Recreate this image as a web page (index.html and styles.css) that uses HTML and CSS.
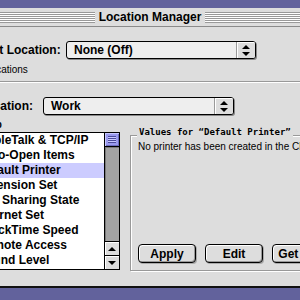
FILE: index.html
```html
<!DOCTYPE html>
<html lang="en">
<head>
    <meta charset="UTF-8">
    <title>Location Manager</title>
    <link rel="stylesheet" href="styles.css">
</head>
<body>
    <div class="window">
        <div class="titlebar">
            <div class="stripes"></div>
            <span class="title">Location Manager</span>
            <div class="stripes"></div>
        </div>

        <div class="content">
            <div class="row">
                <span class="label current-label">Current Location:</span>
                <div class="popup current-popup">
                    <span class="popup-value">None (Off)</span>
                    <span class="popup-arrows">
                        <svg width="8" height="11" viewBox="0 0 8 11"><path d="M4 0 L8 4 L0 4 Z M0 7 L8 7 L4 11 Z" fill="#000"/></svg>
                    </span>
                </div>
            </div>

            <div class="disclosure">
                <svg width="9" height="9" viewBox="0 0 9 9"><path d="M0 2 L9 2 L4.5 7 Z" fill="#000"/></svg>
                <span>Edit Locations</span>
            </div>

            <div class="separator"></div>

            <div class="row edit-row">
                <span class="label edit-label">Edit Location:</span>
                <div class="popup edit-popup">
                    <span class="popup-value">Work</span>
                    <span class="popup-arrows">
                        <svg width="8" height="11" viewBox="0 0 8 11"><path d="M4 0 L8 4 L0 4 Z M0 7 L8 7 L4 11 Z" fill="#000"/></svg>
                    </span>
                </div>
            </div>

            <div class="lower">
                <div class="settings">
                    <div class="settings-head">Setup</div>
                    <div class="list">
                        <ul class="items">
                            <li><span class="check"></span>AppleTalk &amp; TCP/IP</li>
                            <li><span class="check"></span>Auto-Open Items</li>
                            <li class="selected"><span class="check"></span>Default Printer</li>
                            <li><span class="check"></span>Extension Set</li>
                            <li><span class="check"></span>File Sharing State</li>
                            <li><span class="check"></span>Internet Set</li>
                            <li><span class="check"></span>QuickTime Speed</li>
                            <li><span class="check"></span>Remote Access</li>
                            <li><span class="check"></span>Sound Level</li>
                        </ul>
                        <div class="scrollbar">
                            <div class="thumb"><span class="grip"></span></div>
                            <div class="track"></div>
                            <div class="arrow">
                                <svg width="8" height="4" viewBox="0 0 8 4"><path d="M4 0 L8 4 L0 4 Z" fill="#000"/></svg>
                            </div>
                            <div class="arrow">
                                <svg width="8" height="4" viewBox="0 0 8 4"><path d="M0 0 L8 0 L4 4 Z" fill="#000"/></svg>
                            </div>
                        </div>
                    </div>
                </div>

                <div class="group">
                    <span class="group-title">Values for “Default Printer”</span>
                    <p class="group-text">No printer has been created in the Chooser.</p>
                    <div class="buttons">
                        <button class="btn">Apply</button>
                        <button class="btn">Edit</button>
                        <button class="btn">Get Info</button>
                    </div>
                </div>
            </div>
        </div>
    </div>
</body>
</html>
```

FILE: styles.css
```css
html, body {
    margin: 0;
    width: 300px;
    height: 300px;
    overflow: hidden;
}
body {
    background-color: #62629c;
    font-family: 'Liberation Sans', Arial, sans-serif;
    color: #000;
}
.window {
    margin: 8px 0 0 -44px;
    width: 388px;
    height: 280px;
    box-sizing: border-box;
    background-color: #dddddd;
    border-bottom: 2px solid #111;
    display: flex;
    flex-direction: column;
}
.titlebar {
    height: 19px;
    box-sizing: border-box;
    border-bottom: 1px solid #8a8a8a;
    display: flex;
    align-items: center;
    background-color: #dddddd;
}
.stripes {
    flex: 1;
    height: 11px;
    background: repeating-linear-gradient(to bottom, #999 0 1px, #fff 1px 2px);
}
.title {
    padding: 0 4px;
    font-size: 12px;
    font-weight: bold;
    line-height: 18px;
}
.content {
    padding: 14px 0 0 4px;
}
.row {
    display: flex;
    align-items: center;
    height: 18px;
}
.label {
    box-sizing: border-box;
    font-size: 12px;
    font-weight: bold;
    white-space: nowrap;
}
.current-label {
    width: 106px;
}
.edit-label {
    width: 90px;
    margin-left: -7px;
}
.popup {
    height: 18px;
    box-sizing: border-box;
    border: 1px solid #000;
    border-radius: 3px;
    background-color: #eeeeee;
    box-shadow: 1px 1px 0 #888;
    display: flex;
    align-items: center;
    overflow: hidden;
}
.current-popup {
    width: 190px;
}
.edit-popup {
    width: 191px;
}
.popup-value {
    flex: 1;
    padding-left: 7px;
    font-size: 12px;
    font-weight: bold;
}
.popup-arrows {
    width: 18px;
    height: 100%;
    border-left: 1px solid #999;
    background-color: #dddddd;
    box-shadow: inset 1px 1px 0 #fff;
    display: flex;
    align-items: center;
    justify-content: center;
}
.disclosure {
    margin: 5px 0 0 -6px;
    height: 12px;
    display: flex;
    align-items: center;
    gap: 2px;
    font-size: 10px;
    line-height: 12px;
}
.separator {
    margin: 5px 0 0 -4px;
    height: 1px;
    background-color: #999;
    border-bottom: 1px solid #fff;
}
.edit-row {
    margin-top: 14px;
}
.lower {
    margin-top: 4px;
    display: flex;
    align-items: flex-start;
}
.settings-head {
    height: 12px;
    padding-left: 14px;
    font-size: 10px;
    font-weight: bold;
    line-height: 12px;
}
.list {
    margin-top: 1px;
    width: 160px;
    height: 138px;
    box-sizing: border-box;
    border: 1px solid #000;
    background-color: #fff;
    display: flex;
    overflow: hidden;
}
.items {
    flex: 1;
    margin: 0;
    padding: 0;
    list-style: none;
}
.items li {
    height: 15px;
    display: flex;
    align-items: center;
    gap: 0;
    padding-left: 5px;
    font-size: 12px;
    font-weight: bold;
    line-height: 15px;
    white-space: nowrap;
}
.items li.selected {
    background-color: #ccccff;
}
.check {
    width: 10px;
    height: 10px;
    border: 1px solid #000;
    background-color: #eee;
}
.scrollbar {
    width: 14px;
    border-left: 1px solid #000;
    display: flex;
    flex-direction: column;
}
.thumb {
    height: 14px;
    box-sizing: border-box;
    border-bottom: 1px solid #000;
    background-color: #9a9aee;
    box-shadow: inset 1px 1px 0 #c8c8ff, inset -1px -1px 0 #6b6bc0;
    display: flex;
    align-items: center;
    justify-content: center;
}
.grip {
    width: 8px;
    height: 7px;
    background: repeating-linear-gradient(to bottom, #4a4a9a 0 1px, #c8c8ff 1px 2px);
}
.track {
    flex: 1;
    background-color: #a3a3a3;
    box-shadow: inset 1px 1px 0 #7a7a7a;
}
.arrow {
    height: 14px;
    box-sizing: border-box;
    border-top: 1px solid #000;
    background-color: #dddddd;
    box-shadow: inset 1px 1px 0 #fff;
    display: flex;
    align-items: center;
    justify-content: center;
}
.group {
    margin: 16px 0 0 10px;
    width: 220px;
    height: 136px;
    box-sizing: border-box;
    border: 1px solid #999;
    box-shadow: inset 1px 1px 0 #fff, 1px 1px 0 #fff;
    padding: 0 0 7px 7px;
    display: flex;
    flex-direction: column;
    align-items: flex-start;
}
.group-title {
    margin: -9px 0 0 -1px;
    padding: 0 2px;
    background-color: #dddddd;
    font-family: 'DejaVu Sans Mono', 'Liberation Mono', monospace;
    font-size: 9px;
    font-weight: bold;
    line-height: 10px;
    white-space: nowrap;
}
.group-text {
    margin: 4px 0 0;
    font-size: 10px;
    line-height: 12px;
    white-space: nowrap;
}
.buttons {
    margin-top: auto;
    display: flex;
    gap: 9px;
}
.btn {
    width: 58px;
    height: 19px;
    padding: 0;
    border: 1px solid #000;
    border-radius: 4px;
    background-color: #dddddd;
    box-shadow: inset 1px 1px 0 #fff, inset -1px -1px 0 #999, 1px 1px 0 #aaa;
    font-family: 'Liberation Sans', Arial, sans-serif;
    font-size: 12px;
    font-weight: bold;
    color: #000;
    white-space: nowrap;
}
```
